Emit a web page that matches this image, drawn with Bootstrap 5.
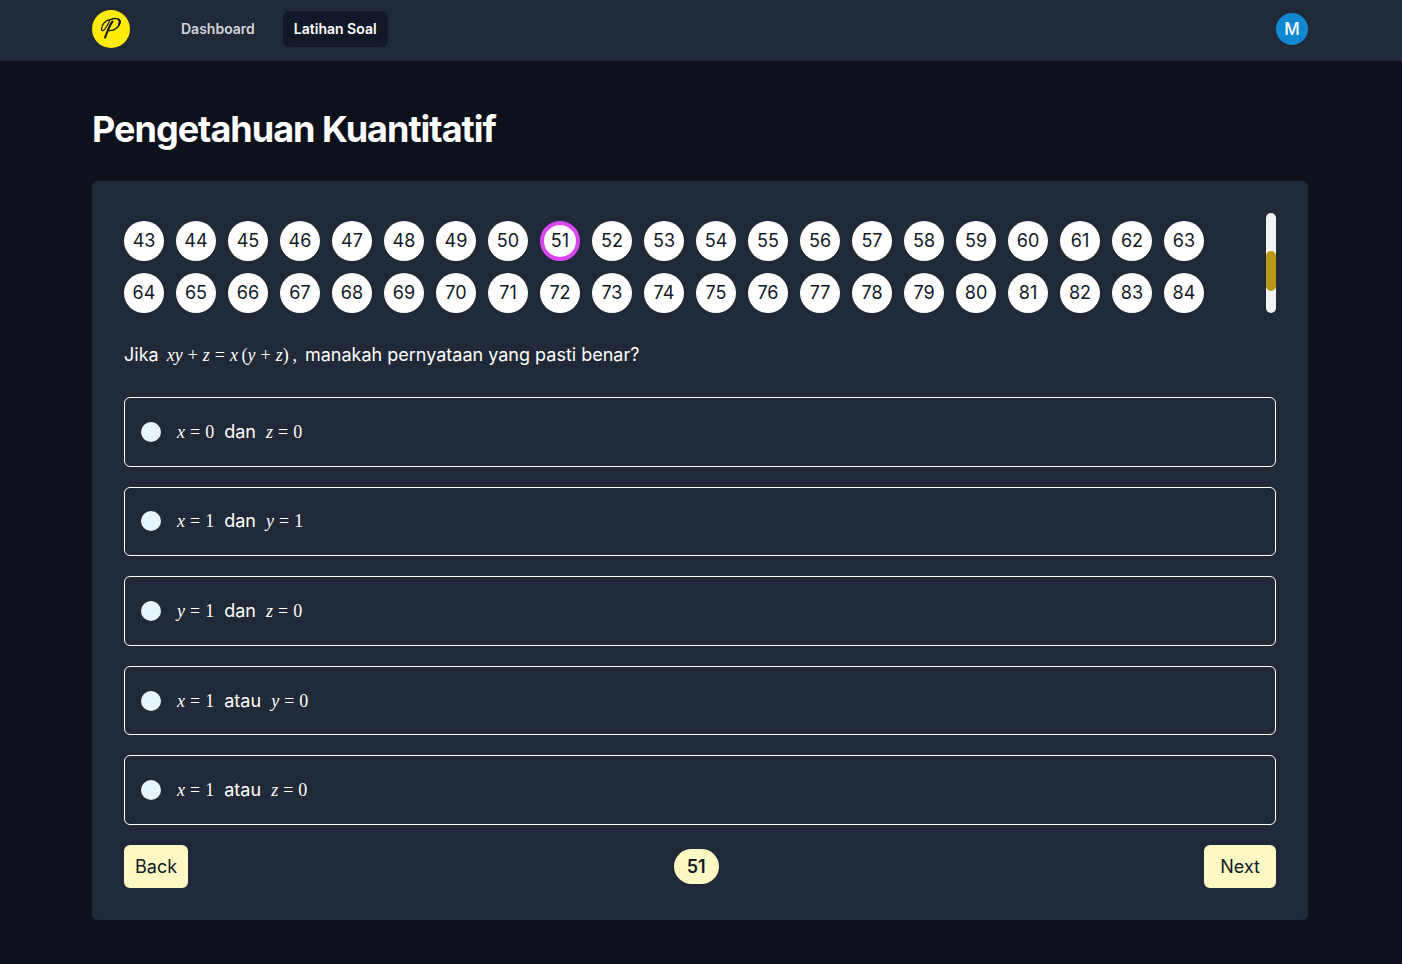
<!DOCTYPE html>
<html lang="id">
<head>
<meta charset="utf-8">
<meta name="viewport" content="width=device-width, initial-scale=1">
<title>Pengetahuan Kuantitatif</title>
<link href="https://cdn.jsdelivr.net/npm/bootstrap@5.3.0/dist/css/bootstrap.min.css" rel="stylesheet">
<style>
  body { background: #0d111b; color: #fff; font-family: Inter, "Liberation Sans", sans-serif; font-size: 18px; line-height: 28px; }
  .page-wrap { max-width: 1280px; padding: 0 33px 0 31px; }
  .topbar { background: #202937; height: 61px; padding: 0 0 3px; }
  .topbar .nav-link { font-size: 14px; line-height: 20px; font-weight: 600; padding: 8px 11px; border-radius: 6px; color: #d1d5db; }
  .topbar .nav-link.active { background: #111827; color: #fff; }
  .main-nav { margin-left: 40px; gap: 17px; }
  .avatar { width: 32px; height: 32px; background: #0f87d1; font-size: 17px; font-weight: 500; line-height: 32px; }
  .title { font-size: 36px; line-height: 40px; font-weight: 700; letter-spacing: -1px; margin: 48px 0 32px; }
  .panel { background: #202937; border-radius: 6px; padding: 32px; }
  .picker { height: 100px; margin-bottom: 28px; }
  .numbers { padding-top: 8px; }
  .num { width: 40px; height: 40px; margin: 0 12px 12px 0; background: #fff; color: #111827; border: 0; border-radius: 50%; padding: 0; line-height: 40px; }
  .num.current { border: 4px solid #d946ef; line-height: 32px; }
  .track { width: 10px; background: #f1f3f3; border-radius: 10px; padding-top: 38px; }
  .thumb { height: 40px; background: #b99716; border-radius: 10px; }
  .question { margin-bottom: 28px; }
  .math { font-family: "Liberation Serif", serif; font-size: 18px; display: inline-flex; gap: 5px; margin: 0 5px; }
  .question .math { margin: 0 3px; }
  .options { display: grid; grid-auto-rows: 1fr; gap: 20px; min-height: 428px; margin-bottom: 20px; }
  .option { border: 1px solid #fff; border-radius: 6px; padding: 0 16px; cursor: pointer; }
  .option input { appearance: none; width: 20px; height: 20px; margin: 0 11px 0 0; border-radius: 50%; background: #e7f5fe; }
  .option input:checked { background: #d946ef; }
  .btn-cream { background: #fef9c3; color: #111827; font-size: 18px; line-height: 27px; border: 0; border-radius: 6px; padding: 8px 11px; }
  .btn-cream:hover { background: #fef08a; }
  .btn-next { padding: 8px 16px; }
  .counter { background: #fef9c3; color: #111827; font-weight: 600; border-radius: 18px; line-height: 27px; padding: 4px 13px; }
</style>
</head>
<body>
<nav class="topbar d-flex" aria-label="Utama">
  <div class="page-wrap w-100 mx-auto d-flex align-items-center">
    <a href="#" aria-label="Beranda" class="d-flex">
      <svg width="38" height="38" viewBox="0 0 38 38">
        <circle cx="19" cy="19" r="19" fill="#fdec09"/>
        <g fill="none" stroke="#17180b" stroke-linecap="round">
          <path d="M19 9.500C13.500 9.500 9.500 15 9.500 19c0 2.500 2 2 3.500 0C15 16.500 17 12.500 18 9.500" stroke-width="1.200"/>
          <path d="M13 27.500C15.500 21.500 17.500 15 20.500 11.500" stroke-width="2"/>
          <path d="M19 9.500c3-1.500 9-1.500 9 2C28 16.500 22 21.500 17 20.500" stroke-width="1.400"/>
          <path d="M26.500 9.500c1.500 1 1.500 3 .5 5" stroke-width="2"/>
        </g>
      </svg>
    </a>
    <div class="main-nav nav flex-nowrap">
      <a class="nav-link" href="#">Dashboard</a>
      <a class="nav-link active" aria-current="page" href="#">Latihan Soal</a>
    </div>
    <button type="button" class="avatar ms-auto rounded-circle border-0 p-0 text-white">M</button>
  </div>
</nav>

<main class="page-wrap mx-auto">
  <h1 class="title">Pengetahuan Kuantitatif</h1>
  <section class="panel">
    <div class="picker d-flex overflow-hidden">
      <div class="numbers d-flex flex-wrap align-content-start flex-grow-1">
        <button class="num">43</button><button class="num">44</button><button class="num">45</button><button class="num">46</button><button class="num">47</button><button class="num">48</button><button class="num">49</button><button class="num">50</button><button class="num current" aria-current="true">51</button><button class="num">52</button><button class="num">53</button><button class="num">54</button><button class="num">55</button><button class="num">56</button><button class="num">57</button><button class="num">58</button><button class="num">59</button><button class="num">60</button><button class="num">61</button><button class="num">62</button><button class="num">63</button>
        <button class="num">64</button><button class="num">65</button><button class="num">66</button><button class="num">67</button><button class="num">68</button><button class="num">69</button><button class="num">70</button><button class="num">71</button><button class="num">72</button><button class="num">73</button><button class="num">74</button><button class="num">75</button><button class="num">76</button><button class="num">77</button><button class="num">78</button><button class="num">79</button><button class="num">80</button><button class="num">81</button><button class="num">82</button><button class="num">83</button><button class="num">84</button>
      </div>
      <div class="track flex-shrink-0"><div class="thumb"></div></div>
    </div>

    <form>
      <p class="question">Jika <span class="math"><i>xy</i><span>+</span><i>z</i><span>=</span><span><i>x</i>&thinsp;(<i>y</i></span><span>+</span><span><i>z</i>)&thinsp;,</span></span> manakah pernyataan yang pasti benar?</p>
      <div class="options">
        <label class="option d-flex align-items-center"><input type="radio" name="jawaban"><span><span class="math"><i>x</i><span>=</span><span>0</span></span> dan <span class="math"><i>z</i><span>=</span><span>0</span></span></span></label>
        <label class="option d-flex align-items-center"><input type="radio" name="jawaban"><span><span class="math"><i>x</i><span>=</span><span>1</span></span> dan <span class="math"><i>y</i><span>=</span><span>1</span></span></span></label>
        <label class="option d-flex align-items-center"><input type="radio" name="jawaban"><span><span class="math"><i>y</i><span>=</span><span>1</span></span> dan <span class="math"><i>z</i><span>=</span><span>0</span></span></span></label>
        <label class="option d-flex align-items-center"><input type="radio" name="jawaban"><span><span class="math"><i>x</i><span>=</span><span>1</span></span> atau <span class="math"><i>y</i><span>=</span><span>0</span></span></span></label>
        <label class="option d-flex align-items-center"><input type="radio" name="jawaban"><span><span class="math"><i>x</i><span>=</span><span>1</span></span> atau <span class="math"><i>z</i><span>=</span><span>0</span></span></span></label>
      </div>
      <div class="d-flex justify-content-between align-items-center">
        <button type="button" class="btn btn-cream">Back</button>
        <span class="counter">51</span>
        <button type="button" class="btn btn-cream btn-next">Next</button>
      </div>
    </form>
  </section>
</main>
<script src="https://cdn.jsdelivr.net/npm/bootstrap@5.3.0/dist/js/bootstrap.bundle.min.js"></script>
</body>
</html>
